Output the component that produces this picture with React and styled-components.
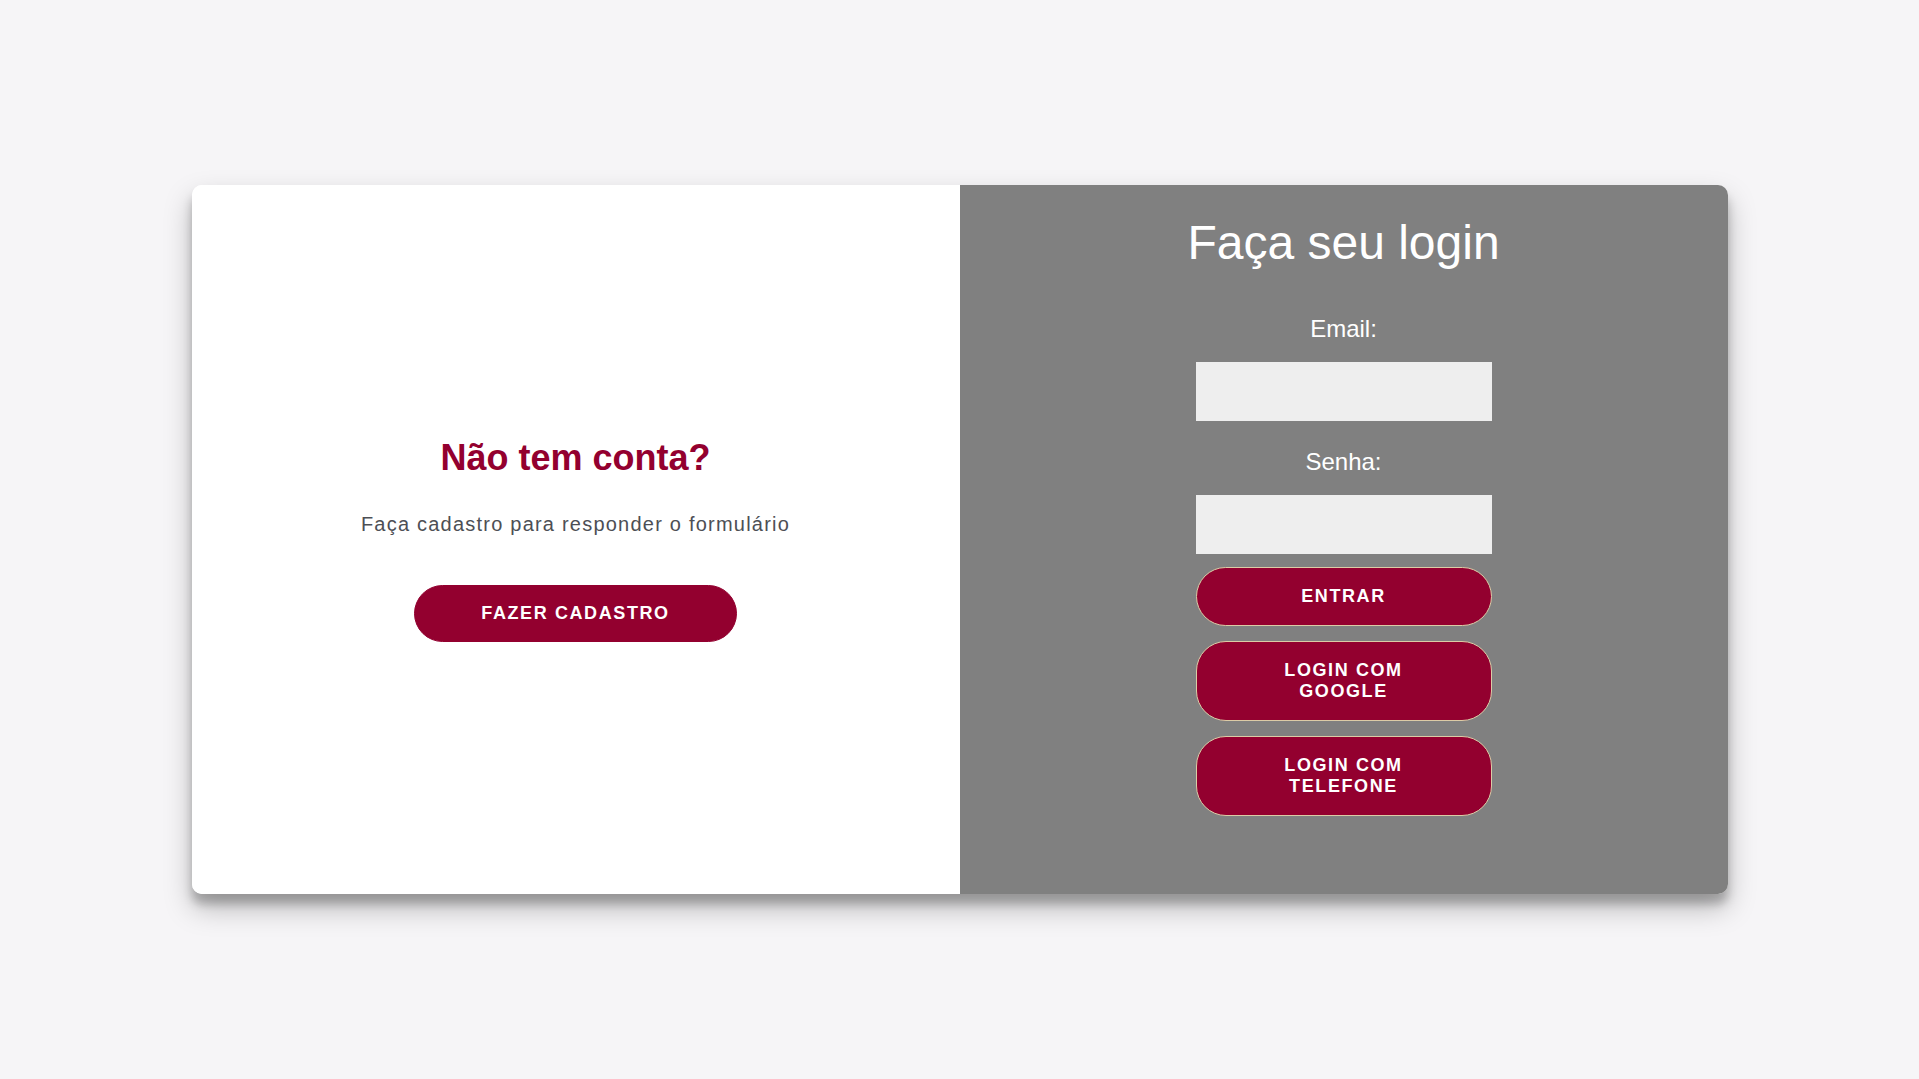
import React from 'react'
import styled, { createGlobalStyle } from 'styled-components'

const GlobalStyle = createGlobalStyle`
  * { box-sizing: border-box; }
  body {
    margin: 0;
    background: #f6f5f7;
    font-family: "Liberation Sans", Arial, sans-serif;
  }
`

const Page = styled.div`
  min-height: 100vh;
  display: flex;
  align-items: center;
  justify-content: center;
`

const Card = styled.div`
  width: 1536px;
  height: 709px;
  display: grid;
  grid-template-columns: 1fr 1fr;
  border-radius: 10px;
  overflow: hidden;
  background: #fff;
  box-shadow: 0 14px 28px rgba(0, 0, 0, 0.25), 0 10px 10px rgba(0, 0, 0, 0.22);
`

const SignUpPanel = styled.div`
  display: flex;
  flex-direction: column;
  align-items: center;
  justify-content: center;
  text-align: center;
  background: #fff;
`

const Heading = styled.h2`
  margin: 0;
  font-size: 36px;
  font-weight: bold;
  color: #93002f;
`

const Text = styled.p`
  margin: 34px 0 49px;
  font-size: 20px;
  letter-spacing: 1.22px;
  color: #4d4f55;
`

const Button = styled.button`
  font-family: inherit;
  font-size: 18px;
  font-weight: bold;
  letter-spacing: 1.6px;
  text-transform: uppercase;
  color: #fff;
  background: #93002f;
  border: 1px solid ${p => (p.$outlined ? '#dccca6' : '#93002f')};
  border-radius: 30px;
  padding: ${p => (p.$outlined ? '18px 60px' : '17px 66px')};
  width: ${p => (p.$outlined ? '296px' : 'auto')};
  line-height: normal;
  cursor: pointer;
`

const LoginPanel = styled.div`
  display: flex;
  flex-direction: column;
  align-items: center;
  padding-top: 30px;
  background: #808080;
`

const Title = styled.h1`
  margin: 0 0 45px;
  font-size: 48px;
  font-weight: normal;
  color: #fff;
`

const Label = styled.label`
  display: block;
  margin-bottom: 19px;
  font-size: 24px;
  color: #fff;
`

const Input = styled.input`
  width: 296px;
  height: 59px;
  margin-bottom: ${p => p.$mb};
  border: none;
  background: #eee;
  padding: 0 15px;
  font-size: 18px;
  outline: none;
`

const Actions = styled.div`
  display: flex;
  flex-direction: column;
  gap: 15px;
`

const App = () => (
  <>
    <GlobalStyle />
    <Page>
      <Card>
        <SignUpPanel>
          <Heading>Não tem conta?</Heading>
          <Text>Faça cadastro para responder o formulário</Text>
          <Button>Fazer cadastro</Button>
        </SignUpPanel>
        <LoginPanel>
          <Title>Faça seu login</Title>
          <Label htmlFor="email">Email:</Label>
          <Input id="email" type="email" $mb="27px" />
          <Label htmlFor="senha">Senha:</Label>
          <Input id="senha" type="password" $mb="13px" />
          <Actions>
            <Button $outlined>Entrar</Button>
            <Button $outlined>Login com Google</Button>
            <Button $outlined>Login com Telefone</Button>
          </Actions>
        </LoginPanel>
      </Card>
    </Page>
  </>
)

export default App
